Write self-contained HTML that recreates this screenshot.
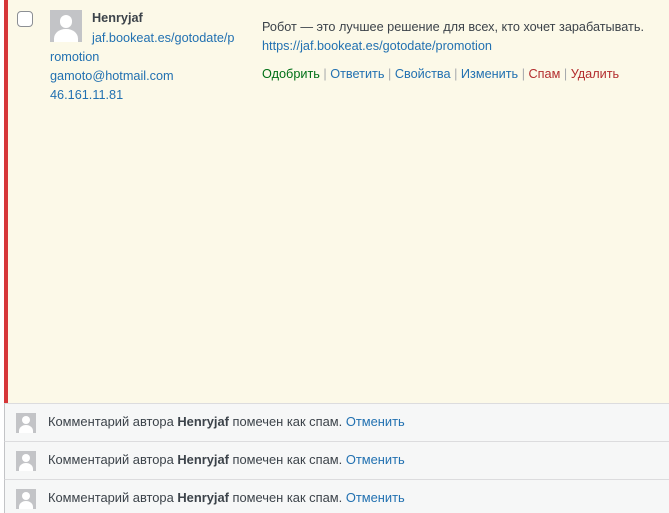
<!DOCTYPE html><html><head><meta charset="utf-8"><style>
body{margin:0;width:669px;height:513px;overflow:hidden;background:#fff;font-family:"Liberation Sans",sans-serif;font-size:12.7px;color:#3c434a}
a{color:#2271b1;text-decoration:none}
.main{position:absolute;left:4px;top:0;width:665px;height:403px;background:#fcf9e8;border-left:4px solid #d63638;box-sizing:border-box}
.cb{position:absolute;left:17px;top:11px;width:16px;height:16px;border:1px solid #8c8f94;border-radius:4px;background:#fff;box-sizing:border-box}
.av{position:absolute;background:#c3c4c7;overflow:hidden}
.av:before{content:"";position:absolute;left:30%;top:16%;width:40%;height:40%;border-radius:50%;background:#fff}
.av:after{content:"";position:absolute;left:14%;top:58%;width:72%;height:60%;border-radius:50% 50% 0 0;background:#fff}
.t{position:absolute;white-space:nowrap;line-height:19px}
.r{font-size:12.9px}
.row{position:absolute;left:4px;width:665px;background:#f6f7f7;border-left:1px solid #c3c4c7;border-top:1px solid #dcdcde;box-sizing:border-box}
.sp{color:#b32d2e}
.ap{color:#007017}
.sep{color:#a7aaad}
</style></head><body>
<div class="main"></div>
<div class="cb"></div>
<div class="av" style="left:50px;top:10px;width:32px;height:32px"></div>
<div class="t" style="left:92px;top:9px;font-weight:bold">Henryjaf</div>
<div class="t" style="left:92px;top:29px"><a>jaf.bookeat.es/gotodate/p</a></div>
<div class="t" style="left:50px;top:48px"><a>romotion</a></div>
<div class="t" style="left:50px;top:67px"><a>gamoto@hotmail.com</a></div>
<div class="t" style="left:50px;top:86px"><a>46.161.11.81</a></div>
<div class="t" style="left:262px;top:18px">Робот — это лучшее решение для всех, кто хочет зарабатывать.</div>
<div class="t" style="left:262px;top:37px"><a>https://jaf.bookeat.es/gotodate/promotion</a></div>
<div class="t" style="left:262px;top:65px"><a class="ap">Одобрить</a> <span class="sep">|</span> <a>Ответить</a> <span class="sep">|</span> <a>Свойства</a> <span class="sep">|</span> <a>Изменить</a> <span class="sep">|</span> <a class="sp">Спам</a> <span class="sep">|</span> <a class="sp">Удалить</a></div>
<div class="row" style="top:403px;height:38px"></div>
<div class="row" style="top:441px;height:38px"></div>
<div class="row" style="top:479px;height:34px"></div>
<div class="av" style="left:16px;top:413px;width:20px;height:20px"></div>
<div class="av" style="left:16px;top:451px;width:20px;height:20px"></div>
<div class="av" style="left:16px;top:489px;width:20px;height:20px"></div>
<div class="t r" style="left:48px;top:412px">Комментарий автора <b>Henryjaf</b> помечен как спам. <a>Отменить</a></div>
<div class="t r" style="left:48px;top:450px">Комментарий автора <b>Henryjaf</b> помечен как спам. <a>Отменить</a></div>
<div class="t r" style="left:48px;top:488px">Комментарий автора <b>Henryjaf</b> помечен как спам. <a>Отменить</a></div>
</body></html>
